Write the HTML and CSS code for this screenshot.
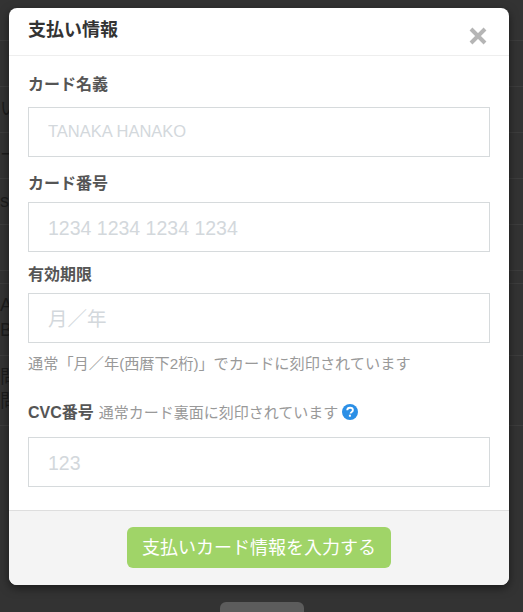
FILE: index.html
```html
<!DOCTYPE html>
<html lang="ja">
<head>
  <meta charset="UTF-8">
  <title>支払い情報</title>
  <link rel="stylesheet" href="styles.css">
</head>
<body>
<!-- page behind the modal -->
<div class="page">
  <div class="page-row page-row-first"></div>
  <div class="page-row"></div>
  <div class="page-row"><span>い</span></div>
  <div class="page-row"><span>ー</span></div>
  <div class="page-row"><span>si</span></div>
  <div class="page-row"></div>
  <div class="page-row page-row-thin"></div>
  <div class="page-row page-row-tall">
    <span>A</span>
    <span>B</span>
  </div>
  <div class="page-row page-row-last">
    <span>問</span>
    <span>問</span>
  </div>
  <div class="page-button"></div>
</div>

<div class="modal">
  <div class="modal-header">
    <h2>支払い情報</h2>
    <svg class="close-icon" viewBox="0 0 18 18" width="18" height="18">
      <path d="M2 2L16 16M16 2L2 16" stroke="#b5b5b5" stroke-width="4"/>
    </svg>
  </div>
  <form class="modal-body">
    <label class="label-name">カード名義</label>
    <input class="input-name" type="text" placeholder="TANAKA HANAKO">

    <label class="label-number">カード番号</label>
    <input type="text" placeholder="1234 1234 1234 1234">

    <label class="label-expiry">有効期限</label>
    <input type="text" placeholder="月／年">
    <p class="hint">通常「月／年(西暦下2桁)」でカードに刻印されています</p>

    <label class="label-cvc">CVC番号 <small>通常カード裏面に刻印されています</small>
      <svg class="help-icon" viewBox="0 0 16 16" width="16" height="16">
        <circle cx="8" cy="8" r="8" fill="#2b8fe6"/>
        <path d="M5.2 6.2C5.3 4.6 6.5 3.7 8 3.7c1.6 0 2.9.9 2.9 2.4 0 1.2-.8 1.8-1.5 2.2-.6.4-.8.6-.8 1.3" fill="none" stroke="#fff" stroke-width="1.9"/>
        <rect x="6.9" y="10.7" width="2" height="2" fill="#fff"/>
      </svg>
    </label>
    <input type="text" placeholder="123">
  </form>
  <div class="modal-footer">
    <button type="button">支払いカード情報を入力する</button>
  </div>
</div>
</body>
</html>
```

FILE: styles.css
```css
body {
  font-family: "Liberation Sans", "Noto Sans CJK JP", sans-serif;
  background-color: #333333;
  margin: 0;
  height: 612px;
  overflow: hidden;
  position: relative;
}

.page {
  display: flex;
  flex-direction: column;
  height: 612px;
  color: #1c1c1c;
  font-size: 18px;
}

.page-row {
  flex: none;
  box-sizing: border-box;
  height: 46px;
  line-height: 44px;
  border-bottom: 1px solid #3d3d3d;
  overflow: hidden;
}

.page-row span {
  display: block;
}

.page-row-first {
  height: 41px;
}

.page-row-thin {
  height: 13px;
}

.page-row-tall {
  height: 72px;
  line-height: 25px;
  padding-top: 9px;
}

.page-row-last {
  height: 70px;
  line-height: 24px;
  padding-top: 9px;
}

.page-button {
  flex: none;
  width: 84px;
  height: 40px;
  margin: 176px auto 0;
  border-radius: 6px;
  background-color: #5c5c5c;
}

.modal {
  position: absolute;
  left: 9px;
  top: 8px;
  width: 500px;
  height: 577px;
  display: flex;
  flex-direction: column;
  border-radius: 8px;
  background-color: white;
  box-shadow: 0 3px 10px rgba(0, 0, 0, 0.5);
  overflow: hidden;
}

.modal-header {
  flex: none;
  box-sizing: border-box;
  height: 48px;
  padding: 0 19px;
  display: flex;
  justify-content: space-between;
  border-bottom: 1px solid #eeeeee;
}

.modal-header h2 {
  margin: 10px 0 0;
  font-size: 18px;
  line-height: 24px;
  color: #333333;
}

.close-icon {
  margin-top: 19px;
  margin-right: 3px;
}

.modal-body {
  flex: 1;
  padding: 0 19px;
}

label {
  display: block;
  font-size: 16px;
  font-weight: bold;
  line-height: 22px;
  color: #555555;
}

.label-name {
  margin-top: 18px;
  margin-bottom: 11px;
}

.label-number {
  margin-top: 16px;
  margin-bottom: 7px;
}

.label-expiry {
  margin-top: 12px;
  margin-bottom: 7px;
}

.label-cvc {
  margin-top: 28px;
  margin-bottom: 13px;
  display: flex;
  align-items: center;
  gap: 5px;
}

.label-cvc small {
  font-size: 15px;
  font-weight: normal;
  color: #999999;
}

.help-icon {
  margin-left: -1px;
  margin-top: -2px;
}

input {
  display: block;
  width: 100%;
  height: 50px;
  box-sizing: border-box;
  padding: 2px 19px 0;
  border: 1px solid #d6dadc;
  font-family: inherit;
  font-size: 19.5px;
  outline: none;
}

input::placeholder {
  color: #d3d8dc;
}

.input-name {
  padding: 0 19px 2px;
  font-size: 16.5px;
}

.hint {
  margin: 11px 0 0;
  font-size: 15.2px;
  line-height: 20px;
  color: #999999;
}

.modal-footer {
  flex: none;
  box-sizing: border-box;
  height: 75px;
  padding-top: 16px;
  display: flex;
  justify-content: center;
  border-top: 1px solid #dedede;
  background-color: #f4f4f4;
}

button {
  width: 264px;
  height: 41px;
  padding: 0 0 3px;
  border: none;
  border-radius: 6px;
  background-color: #a0d468;
  color: white;
  font-family: inherit;
  font-size: 18px;
}
```
